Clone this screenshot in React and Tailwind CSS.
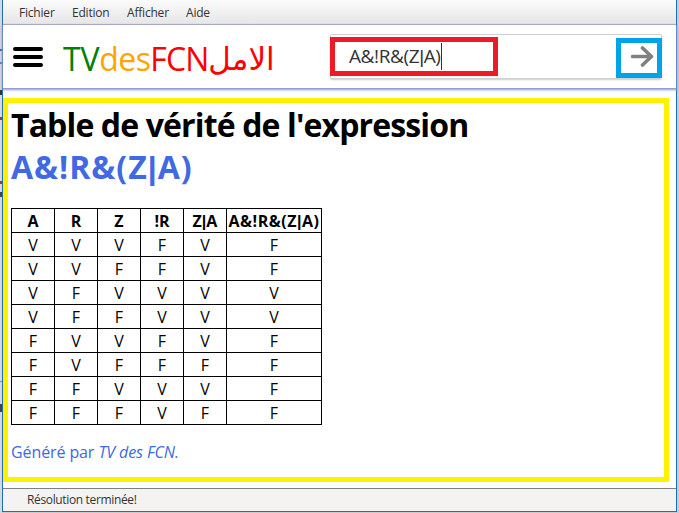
const headers = ["A", "R", "Z", "!R", "Z|A", "A&!R&(Z|A)"];
const rows = ["VVVFVF", "VVFFVF", "VFVVVV", "VFFVVV", "FVVFVF", "FVFFFF", "FFVVVF", "FFFVFF"];

// Renders a logical expression with a narrow "|" operator.
function Expr({ text }) {
  const [left, right] = text.split("|");
  if (right === undefined) return text;
  return (
    <>
      {left}
      <span className="font-['Liberation_Sans',sans-serif] leading-none">|</span>
      {right}
    </>
  );
}

function MenuBar() {
  return (
    <nav className="flex h-[25px] shrink-0 items-center gap-[18px] border-b border-[#b4b4b4] bg-linear-to-b from-[#fbfbfb] to-[#e6e6e6] pl-4 pt-[2px] text-[12px] tracking-[-0.2px] text-[#333]">
      <span className="w-[35px]">Fichier</span>
      <span className="w-[37px]">Edition</span>
      <span className="w-[41px]">Afficher</span>
      <span>Aide</span>
    </nav>
  );
}

function Header() {
  return (
    <header className="z-10 flex h-[63px] shrink-0 items-start bg-white shadow-[0_1px_2px_1px_#8c96d6]">
      <div className="ml-[10px] mt-[22px] flex w-[30px] flex-col gap-1">
        <i className="h-1 rounded-sm bg-black" />
        <i className="h-1 rounded-sm bg-black" />
        <i className="h-1 rounded-sm bg-black" />
      </div>
      <div className="ml-[20px] mt-[13px] flex w-[212px] whitespace-nowrap text-[32px] leading-[42px]">
        <span className="tracking-[-0.2px] text-[#008000]">TV</span>
        <span className="tracking-[-0.6px] text-[#ffa500]">des</span>
        <span className="w-[58px] tracking-[-0.9px] text-[#f00]">FCN</span>
        <span dir="rtl" className="font-['DejaVu_Sans',sans-serif] text-[31px] text-[#f00]">الامل</span>
      </div>
      <div className="ml-[55px] mt-[9px] flex h-[45px] w-[332px] items-start justify-between rounded-[2px] border border-[#d0d0d0] shadow-[0_1px_2px_#ccc]">
        <div className="-ml-px mt-[2px] flex h-[39px] w-[168px] items-center border-[5px] border-[#ed1c24] pl-[14px] text-[19px] tracking-[-0.4px] text-[#333]">
          <span><Expr text="A&!R&(Z|A)" /></span>
          <i className="h-[27px] w-px bg-[#333]" />
        </div>
        <div className="-mr-px mt-[3px] flex h-10 w-[46px] shrink-0 items-center justify-center border-[5px] border-[#00a2e8] pl-[6px]">
          <svg width="24" height="24" viewBox="0 0 24 24" fill="none" stroke="#808080" strokeWidth="3.6" strokeLinecap="round" strokeLinejoin="round">
            <path d="M2.5 10.5H21M12.5 2L21.5 10.5L12.5 19" />
          </svg>
        </div>
      </div>
    </header>
  );
}

function TruthTable() {
  return (
    <table className="mt-[20px] w-[311px] table-fixed border-collapse text-center text-[16px] text-black">
      <colgroup>
        {headers.map((h, i) => (
          <col key={h} className={i === 5 ? "w-[95px]" : "w-[43px]"} />
        ))}
      </colgroup>
      <thead>
        <tr className="h-6">
          {headers.map((h, i) => (
            <th key={h} className={`h-6 whitespace-nowrap border border-black p-0 leading-[22px] font-bold ${i === 5 ? "tracking-[0.5px]" : ""}`}><Expr text={h} /></th>
          ))}
        </tr>
      </thead>
      <tbody>
        {rows.map((r) => (
          <tr key={r} className="h-6">
            {[...r].map((c, i) => (
              <td key={i} className="h-6 border border-black p-0 leading-[22px]">{c}</td>
            ))}
          </tr>
        ))}
      </tbody>
    </table>
  );
}

export default function App() {
  return (
    <div className="flex h-[513px] w-[679px] overflow-hidden bg-[#c9cdd2] font-['Open_Sans','Noto_Sans',sans-serif]">
      <div className="flex w-[2px] shrink-0 flex-col bg-[#d5d8dc]">
        <i className="mt-[49px] h-[2px] bg-[#3a62b8]" />
        <i className="mt-[11px] h-[2px] bg-[#4a86c8]" />
        <i className="mt-[26px] h-[5px] bg-[#333]" />
        <i className="mt-[22px] h-[3px] bg-[#d8202a]" />
        <i className="mt-[61px] h-[3px] bg-[#d8202a]" />
        <i className="mt-[8px] h-[5px] bg-[#444]" />
        <i className="mt-[184px] h-px bg-[#6f8fae]" />
        <i className="mt-[22px] h-[8px] bg-[#444]" />
      </div>
      <div className="flex h-[512px] w-[675px] flex-col border border-t-0 border-[#1e70b4] bg-white">
        <MenuBar />
        <Header />
        <main className="mt-[10px] h-[384px] w-[666px] shrink-0 border-[5px] border-[#fff200] pl-[3px]">
          <h1 className="whitespace-nowrap text-[32px] leading-[43px] font-bold text-black">
            <span className="block tracking-[-0.87px]">Table de vérité de l'expression</span>
            <span className="-mt-px block h-[43px] tracking-[1px] text-[#4169e1]"><Expr text="A&!R&(Z|A)" /></span>
          </h1>
          <TruthTable />
          <p className="mt-[16px] text-[16px] leading-[22px] tracking-[-0.1px] text-[#4169e1]">
            Généré par <em>TV des FCN.</em>
          </p>
        </main>
        <footer className="mt-[6px] flex flex-1 items-center border-t border-[#808080] bg-[#f3f3f3] pl-6 text-[12px] tracking-[-0.35px] text-[#333]">
          Résolution terminée!
        </footer>
      </div>
    </div>
  );
}
